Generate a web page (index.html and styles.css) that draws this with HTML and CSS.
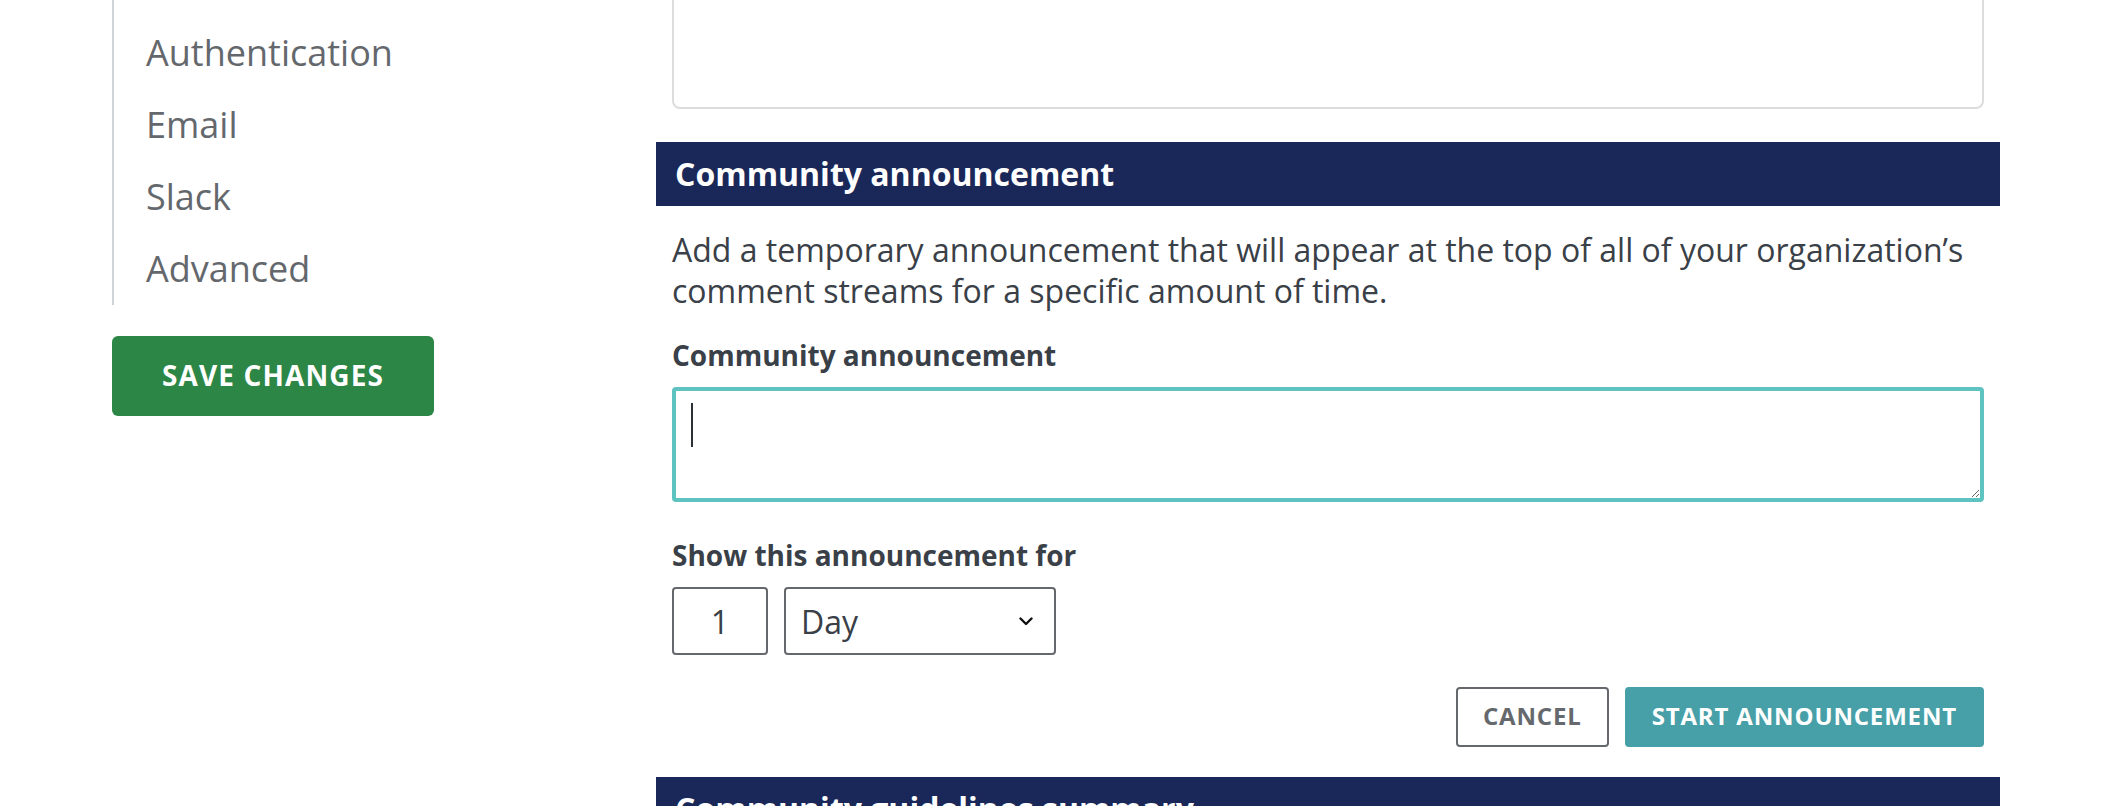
FILE: index.html
```html
<!DOCTYPE html>
<html lang="en">
<head>
<meta charset="utf-8">
<title>Configure – Organization settings</title>
<link rel="stylesheet" href="styles.css">
</head>
<body>
<div class="page">
  <aside class="sidebar">
    <nav class="side-nav">
      <a class="side-link" href="#">Authentication</a>
      <a class="side-link" href="#">Email</a>
      <a class="side-link" href="#">Slack</a>
      <a class="side-link" href="#">Advanced</a>
    </nav>
    <button class="btn-save" type="button">Save changes</button>
  </aside>
  <main class="main">
    <div class="section-body">
      <div class="prev-field"></div>
    </div>
    <section class="section">
      <h2 class="section-title">Community announcement</h2>
      <div class="section-body">
        <p class="desc">Add a temporary announcement that will appear at the top of all of your organization’s comment streams for a specific amount of time.</p>
        <label class="field-label" for="ann">Community announcement</label>
        <div class="textarea-wrap">
          <textarea id="ann" class="ann-text"></textarea>
          <span class="caret"></span>
        </div>
        <div class="field-label label-duration">Show this announcement for</div>
        <div class="duration-row">
          <input class="num-input" type="number" value="1" aria-label="Amount">
          <div class="select-wrap">
            <select class="unit-select" aria-label="Unit">
              <option>Day</option>
              <option>Hour</option>
              <option>Week</option>
            </select>
            <svg class="chevron" viewBox="0 0 14 9" aria-hidden="true"><polyline points="1.5,1.5 7,7 12.5,1.5" fill="none" stroke="#111" stroke-width="2.4" stroke-linecap="round" stroke-linejoin="round"/></svg>
          </div>
        </div>
        <div class="actions">
          <button class="btn-cancel" type="button">Cancel</button>
          <button class="btn-start" type="button">Start announcement</button>
        </div>
      </div>
    </section>
    <section class="section section-next">
      <h2 class="section-title">Community guidelines summary</h2>
    </section>
  </main>
</div>
</body>
</html>
```

FILE: styles.css
```css
* { box-sizing: border-box; }

html, body {
  margin: 0;
  padding: 0;
  background: #fff;
  overflow: hidden;
}

body {
  font-family: "Open Sans", "Noto Sans", sans-serif;
  color: #3a4047;
}

.page {
  display: flex;
  gap: 222px;
  padding: 0 122px 0 112px;
}

/* Sidebar */
.sidebar {
  width: 322px;
  flex: none;
  display: flex;
  flex-direction: column;
  align-items: flex-start;
}

.side-nav {
  display: flex;
  flex-direction: column;
  align-self: stretch;
  border-left: 2px solid #cfd4d9;
  padding-top: 17px;
}

.side-link {
  font-size: 36px;
  line-height: 72px;
  padding-left: 32px;
  color: #64686d;
  text-decoration: none;
}

.btn-save {
  margin-top: 31px;
  width: 322px;
  height: 80px;
  padding: 0 0 2px;
  background: #2c8646;
  color: #fff;
  border: none;
  border-radius: 6px;
  font-family: "Open Sans", sans-serif;
  font-size: 28px;
  font-weight: 700;
  letter-spacing: 0.04em;
  text-transform: uppercase;
}

/* Main column */
.main {
  flex: 1;
  min-width: 0;
}

.section-body {
  padding: 0 16px;
}

.prev-field {
  height: 109px;
  border: 2px solid #dcdcdc;
  border-top: 0;
  border-radius: 0 0 8px 8px;
}

.section {
  margin-top: 33px;
}

.section-next {
  margin-top: 30px;
}

.section-title {
  margin: 0;
  background: #1a2859;
  color: #fff;
  font-size: 32px;
  font-weight: 700;
  line-height: 64px;
  padding: 0 19px;
}

.desc {
  margin: 23px 0 0;
  font-size: 32px;
  line-height: 41px;
}

.field-label {
  display: block;
  margin: 24px 0 12px;
  font-size: 28px;
  font-weight: 700;
  line-height: 40px;
}

.label-duration {
  margin-top: 33px;
}

.textarea-wrap {
  position: relative;
}

.ann-text {
  display: block;
  width: 100%;
  height: 115px;
  border: 4px solid #5ec3c1;
  border-radius: 4px;
  resize: vertical;
  font-family: "Open Sans", sans-serif;
  font-size: 32px;
  padding: 12px 16px;
  outline: none;
  color: #3a4047;
}

.caret {
  position: absolute;
  left: 19px;
  top: 16px;
  width: 2px;
  height: 44px;
  background: #2b3035;
}

.duration-row {
  display: flex;
  gap: 16px;
}

.num-input {
  width: 96px;
  height: 68px;
  border: 2px solid #65696e;
  border-radius: 4px;
  font-family: "Open Sans", sans-serif;
  font-size: 32px;
  text-align: center;
  color: #3a4047;
  padding: 0;
  -moz-appearance: textfield;
}

.num-input::-webkit-inner-spin-button,
.num-input::-webkit-outer-spin-button {
  -webkit-appearance: none;
  margin: 0;
}

.select-wrap {
  position: relative;
  width: 272px;
}

.unit-select {
  -webkit-appearance: none;
  appearance: none;
  width: 100%;
  height: 68px;
  border: 2px solid #65696e;
  border-radius: 4px;
  font-family: "Open Sans", sans-serif;
  font-size: 32px;
  padding: 0 15px;
  background: #fff;
  color: #3a4047;
}

.chevron {
  position: absolute;
  right: 23px;
  top: 30px;
  width: 14px;
  height: 9px;
  pointer-events: none;
}

.actions {
  display: flex;
  justify-content: flex-end;
  gap: 16px;
  margin-top: 32px;
}

.btn-cancel,
.btn-start {
  height: 60px;
  padding: 0 25px 3px;
  border-radius: 4px;
  font-family: "Open Sans", sans-serif;
  font-size: 24px;
  font-weight: 700;
  letter-spacing: 0.035em;
  text-transform: uppercase;
}

.btn-cancel {
  background: #fff;
  border: 2px solid #65686c;
  color: #65686c;
}

.btn-start {
  background: #479fa8;
  border: 2px solid #479fa8;
  color: #fff;
}
```
